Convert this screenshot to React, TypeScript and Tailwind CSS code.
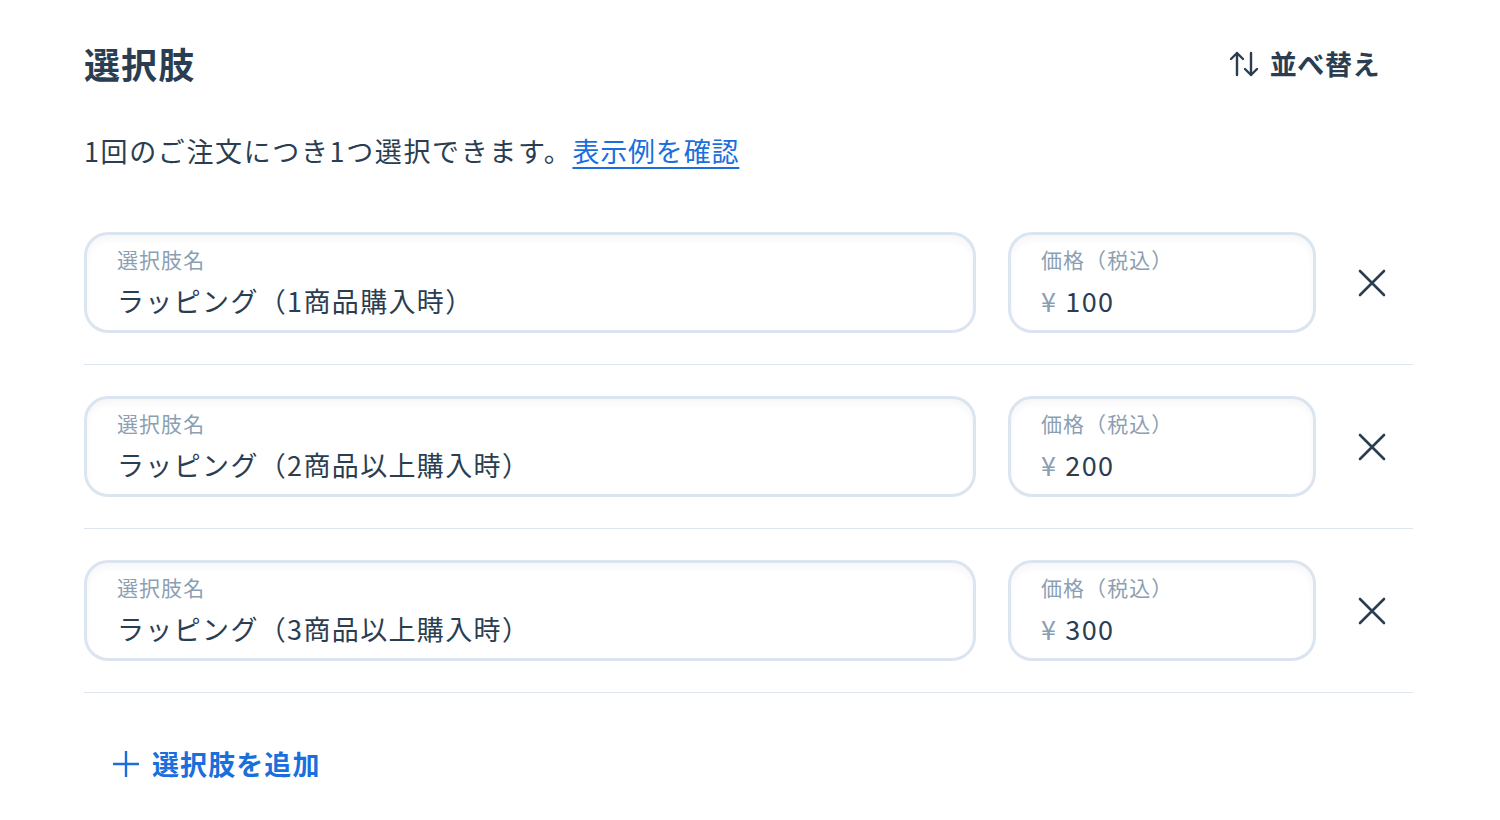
import { useState } from "react";

const initialOptions = [
  { id: 1, name: "ラッピング（1商品購入時）", price: "100" },
  { id: 2, name: "ラッピング（2商品以上購入時）", price: "200" },
  { id: 3, name: "ラッピング（3商品以上購入時）", price: "300" },
];

const SortIcon = () => (
  <svg width="30" height="26" viewBox="0 0 30 26" fill="none" stroke="currentColor" strokeWidth="2.4" strokeLinecap="round" strokeLinejoin="round">
    <path d="M8 24V2M2 8l6-6 6 6" />
    <path d="M22 2v22M16 18l6 6 6-6" />
  </svg>
);

const CloseIcon = () => (
  <svg width="28" height="28" viewBox="0 0 28 28" fill="none" stroke="currentColor" strokeWidth="2.6" strokeLinecap="round">
    <path d="M2 2l24 24M26 2L2 26" />
  </svg>
);

const PlusIcon = () => (
  <svg width="28" height="28" viewBox="0 0 28 28" fill="none" stroke="currentColor" strokeWidth="2.4">
    <path d="M14 1v26M1 14h26" />
  </svg>
);

const Field = ({ label, children, className }: { label: string; children: React.ReactNode; className: string }) => (
  <div
    className={`h-[101px] rounded-[24px] border-[3px] border-[#dbe5f0] bg-white pl-[30px] pt-[8px] shadow-[inset_0_5px_6px_rgba(40,60,90,0.04)] ${className}`}
  >
    <div className="text-[21px] leading-[32px] tracking-[0.05em] text-[#8c9fb2]">{label}</div>
    <div className="mt-[7px] text-[27px] leading-[38px] tracking-[0.05em] text-[#2b3e51]">{children}</div>
  </div>
);

export default function App() {
  const [options, setOptions] = useState(initialOptions);

  return (
    <div className="min-h-screen bg-white font-['Noto_Sans_CJK_JP','Noto_Sans',sans-serif] text-[#2b3e51]">
      <div className="pl-[84px] pr-[87px] pt-[38px]">
        <div className="flex items-center justify-between">
          <h2 className="text-[36px] font-bold leading-[48px] tracking-[0.03em]">選択肢</h2>
          <button className="mr-[33px] mt-[2px] flex items-center gap-[11px] text-[27px] font-bold leading-[48px] tracking-[0.02em]">
            <SortIcon />
            並べ替え
          </button>
        </div>

        <p className="mt-[43px] text-[27px] leading-[40px] tracking-[0.06em]">
          1回のご注文につき1つ選択できます。
          <a href="#" className="ml-0 tracking-[0.03em] text-[#1a6fdc] underline decoration-[2px] underline-offset-[5px]">
            表示例を確認
          </a>
        </p>

        <div className="mt-[30px]">
          {options.map((opt) => (
            <div key={opt.id} className="flex items-center border-b border-[#dde5ee] py-[31px]">
              <Field label="選択肢名" className="flex-1">
                {opt.name}
              </Field>
              <Field label="価格（税込）" className="ml-[32px] w-[308px]">
                <span className="mr-[8px] text-[#8c9fb2]">¥</span>
                {opt.price}
              </Field>
              <button
                className="ml-[42px] mr-[27px] text-[#2b3e51]"
                onClick={() => setOptions(options.filter((o) => o.id !== opt.id))}
              >
                <CloseIcon />
              </button>
            </div>
          ))}
        </div>

        <button className="ml-[28px] mt-[51px] flex h-[40px] items-center gap-[12px] text-[27px] font-bold tracking-[0.04em] text-[#1a6fdc]">
          <PlusIcon />
          選択肢を追加
        </button>
      </div>
    </div>
  );
}
